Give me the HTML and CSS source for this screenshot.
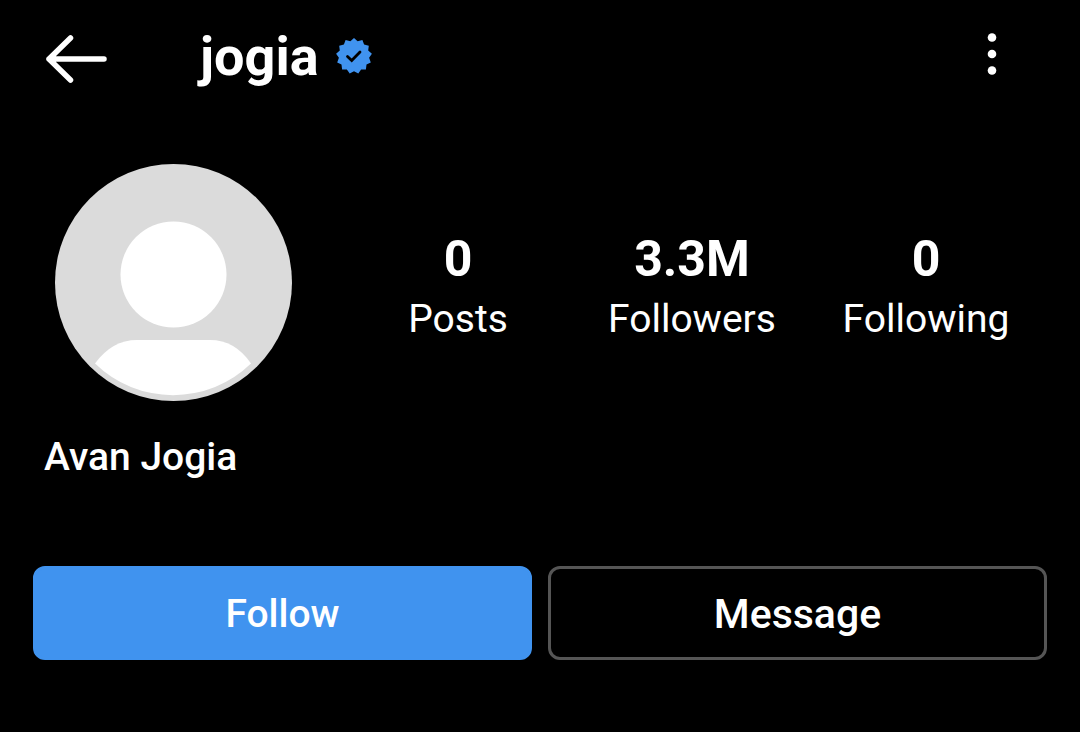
FILE: index.html
```html
<!DOCTYPE html>
<html lang="en">

<head>
    <meta charset="UTF-8">
    <meta name="viewport" content="width=device-width, initial-scale=1.0">
    <title>jogia</title>
    <link rel="stylesheet" href="styles.css">
</head>

<body>
    <header class="topbar">
        <button class="icon-btn" type="button" aria-label="Back">
            <svg class="icon-back" viewBox="0 0 64 54">
                <path d="M26.500 9L5 30l21.500 21M5 30h55" />
            </svg>
        </button>
        <h1 class="username">jogia</h1>
        <svg class="verified" viewBox="0 0 36 36" role="img" aria-label="Verified">
            <path class="verified-badge" d="M18 0L21.600 3.200 26.400 2.100 28.100 6.600 32.800 7.800 32.200 12.600 35.900 15.800 33.100 19.800 34.800 24.400 30.500 26.600 29.900 31.500 25.100 31.500 22.300 35.500 18 33.200 13.700 35.500 10.900 31.500 6.100 31.500 5.500 26.600 1.200 24.400 2.900 19.800 .1 15.800 3.800 12.600 3.200 7.800 7.900 6.600 9.600 2.100 14.400 3.200z" />
            <path class="verified-check" d="M11.500 18.500l4.200 4 8.300-8.500" />
        </svg>
        <button class="icon-btn menu" type="button" aria-label="Options">
            <svg class="icon-dots" viewBox="0 0 16 48">
                <circle cx="8" cy="5.500" r="4.300" />
                <circle cx="8" cy="22" r="4.300" />
                <circle cx="8" cy="38.500" r="4.300" />
            </svg>
        </button>
    </header>

    <main class="profile">
        <section class="summary">
            <svg class="avatar" viewBox="0 0 237 237" role="img" aria-label="Profile picture">
                <circle class="avatar-bg" cx="118.500" cy="118.500" r="118.500" />
                <circle class="avatar-person" cx="118.500" cy="110.500" r="53" />
                <path class="avatar-person" d="M40 199.500Q57 176 82 176h73q25 0 41 23.500a112 112 0 0 1-156 0z" />
            </svg>
            <ul class="stats">
                <li class="stat"><strong>0</strong><span>Posts</span></li>
                <li class="stat"><strong>3.3M</strong><span>Followers</span></li>
                <li class="stat"><strong>0</strong><span>Following</span></li>
            </ul>
        </section>

        <h2 class="fullname">Avan Jogia</h2>

        <div class="actions">
            <button class="btn btn-follow" type="button">Follow</button>
            <button class="btn btn-message" type="button">Message</button>
        </div>
    </main>
</body>

</html>
```
FILE: styles.css
```css
* {
    box-sizing: border-box;
}

body {
    margin: 0;
    background: #000;
    color: #fff;
    font-family: Roboto, sans-serif;
}

button {
    font-family: inherit;
    color: inherit;
    cursor: pointer;
}

.topbar {
    display: flex;
    align-items: center;
    height: 112px;
    padding: 0 80px 0 44px;
}

.icon-btn {
    display: flex;
    padding: 0;
    border: 0;
    background: none;
}

.icon-back {
    width: 64px;
    height: 54px;
    fill: none;
    stroke: #fff;
    stroke-width: 5.5;
    stroke-linecap: round;
    stroke-linejoin: round;
}

.username {
    margin: 0 17px 0 92px;
    padding-top: 2px;
    font-size: 54px;
    line-height: 64px;
    font-weight: 700;
}

.verified {
    width: 36px;
    height: 36px;
}

.verified-badge {
    fill: #4093ef;
}

.verified-check {
    fill: none;
    stroke: #000;
    stroke-width: 2.8;
    stroke-linecap: round;
}

.menu {
    margin-left: auto;
}

.icon-dots {
    width: 16px;
    height: 48px;
    fill: #fff;
}

.profile {
    padding: 52px 33px 72px;
}

.summary {
    display: flex;
    align-items: center;
    padding: 0 4px 0 22px;
}

.avatar {
    flex: none;
    width: 237px;
    height: 237px;
}

.avatar-bg {
    fill: #dbdbdb;
}

.avatar-person {
    fill: #fff;
}

.stats {
    display: grid;
    grid-template-columns: repeat(3, 1fr);
    flex: 1;
    margin: 0 0 0 49px;
    padding: 12px 0 0;
    list-style: none;
}

.stat {
    display: flex;
    flex-direction: column;
    align-items: center;
    font-size: 39px;
    line-height: 60px;
}

.stat strong {
    font-size: 50px;
    font-weight: 700;
}

.fullname {
    margin: 32px 11px 85px;
    font-size: 39px;
    line-height: 48px;
    font-weight: 500;
}

.actions {
    display: flex;
    gap: 16px;
}

.btn {
    flex: 1;
    height: 94px;
    padding: 2px 0 0;
    border: 3px solid #555;
    border-radius: 12px;
    background: #000;
    font-size: 41px;
    font-weight: 500;
}

.btn-follow {
    border-color: #4093ef;
    background: #4093ef;
    font-size: 39px;
}
```
